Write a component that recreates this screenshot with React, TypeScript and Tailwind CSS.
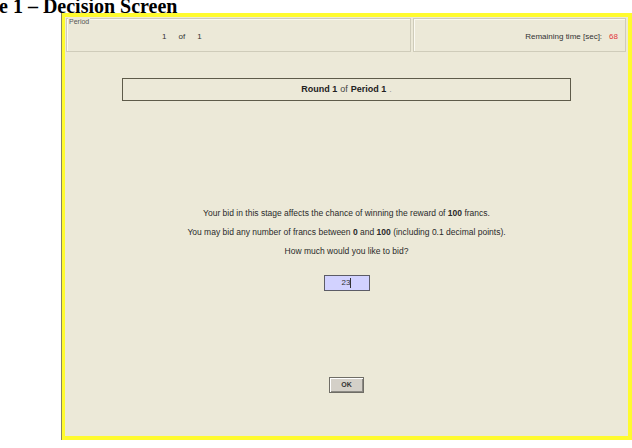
import React from 'react';

const ui = { fontFamily: '"Liberation Sans", Arial, sans-serif' };

const App: React.FC = () => {
  return (
    <div className="w-[632px] h-[448px] bg-white overflow-hidden relative">
      {/* Caption (cropped on the left) */}
      <div className="h-[17px]">
        <div
          className="-mt-[4px] -ml-[1px] text-[20px] leading-none font-bold text-black whitespace-nowrap"
          style={{ fontFamily: '"Liberation Serif", "Times New Roman", serif' }}
        >
          e 1 – Decision Screen
        </div>
      </div>

      {/* Screen frame */}
      <div className="ml-[61px] w-[571px] h-[427px] border-l border-[#8a8660] flex">
        <div className="flex-1 border-[4px] border-l-[3px] border-[#fffb2e] bg-[#ece9d8] flex flex-col" style={ui}>
          {/* Top panels */}
          <div className="flex gap-[2px] pl-[1px] pr-[2px] pt-[1px] h-[35px]">
            <div className="relative w-[345px] border border-[#cfccba] shadow-[inset_1px_1px_0_#fbfaf3] flex items-center">
              <span className="absolute left-[1px] -top-[1px] text-[7px] leading-[8px] text-[#555] bg-[#ece9d8] px-[1px]">
                Period
              </span>
              <div className="flex items-center text-[8px] text-[#333] pl-[95px] pt-[3px]">
                <span>1</span>
                <span className="ml-[12px]">of</span>
                <span className="ml-[12px]">1</span>
              </div>
            </div>
            <div className="flex-1 border border-[#cfccba] shadow-[inset_1px_1px_0_#fbfaf3] flex items-center justify-end pr-[7px] pt-[3px]">
              <span className="text-[8px] text-[#333]">Remaining time [sec]:</span>
              <span className="text-[8px] text-[#e2343b] ml-[7px]">68</span>
            </div>
          </div>

          {/* Round banner */}
          <div className="mt-[26px] mx-[57px] h-[23px] border border-[#5e5b4a] flex items-center justify-center text-[9px] text-[#222]">
            <span className="font-bold">Round 1</span>
            <span className="ml-[3px] text-[#444]">of</span>
            <span className="ml-[3px] font-bold">Period 1</span>
            <span className="ml-[3px] text-[#999]">.</span>
          </div>

          {/* Question */}
          <div className="mt-[103px] flex flex-col items-center text-[8.5px] leading-[19px] text-[#2a2a2a]">
            <p>
              Your bid in this stage affects the chance of winning the reward of <b>100</b> francs.
            </p>
            <p>
              You may bid any number of francs between <b>0</b> and <b>100</b> (including 0.1 decimal points).
            </p>
            <p>How much would you like to bid?</p>
          </div>

          {/* Bid input */}
          <div className="mt-[14px] flex justify-center">
            <div className="w-[46px] h-[16px] border border-[#5c5c66] bg-[#d2d2ff] flex items-center justify-center text-[8px] text-[#333]">
              <span>23</span>
              <span className="w-px h-[10px] bg-[#333]" />
            </div>
          </div>

          {/* OK button */}
          <div className="mt-[86px] flex justify-center">
            <div className="w-[35px] h-[16px] bg-[#d4d0c8] border border-[#6f6d66] shadow-[inset_1px_1px_0_#ffffff,inset_-1px_-1px_0_#8c8a84] flex items-center justify-center text-[7px] font-bold text-[#333]">
              OK
            </div>
          </div>
        </div>
      </div>
    </div>
  );
};

export default App;
